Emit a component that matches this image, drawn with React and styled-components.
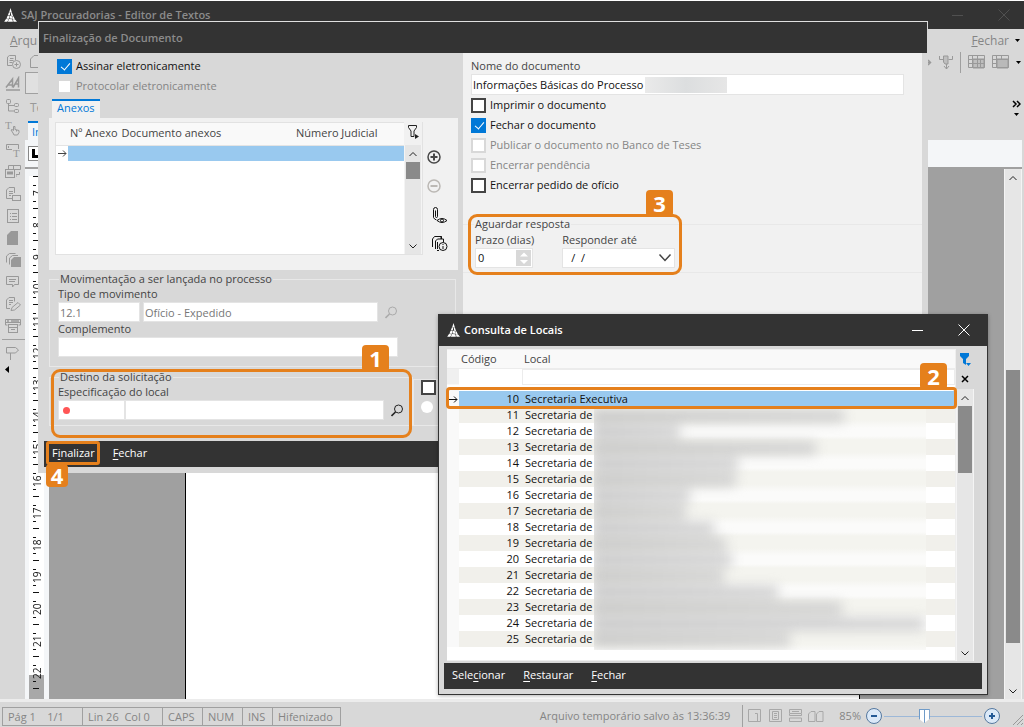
import { useState } from "react";
import styled, { createGlobalStyle, css } from "styled-components";

const GlobalStyle = createGlobalStyle`
    * {
        box-sizing: border-box;
    }
    body {
        margin: 0;
        background: #d8d8d8;
        font-family: "Open Sans", "Noto Sans", sans-serif;
        font-size: 11px;
        line-height: 14px;
        color: #444;
    }
    button, input, select {
        font: inherit;
        color: inherit;
        margin: 0;
        border-radius: 0;
    }
    svg {
        display: block;
        flex: none;
    }
`
const Desktop = styled.div`
    position: relative;
    display: flex;
    flex-direction: column;
    height: 100vh;
    overflow: hidden;
`
const AppTitle = styled.header`
    display: flex;
    align-items: center;
    gap: 4px;
    height: 29px;
    padding: 0 0 0 4px;
    background: #333;
    border-top: 1px solid #fff;
    color: #8b8b8b;
    h1 {
        flex: 1;
        margin: 0;
        font-size: 11px;
        font-weight: 600;
    }
`
const IconButton = styled.button`
    display: flex;
    align-items: center;
    justify-content: center;
    flex: none;
    padding: 0;
    border: 0;
    background: transparent;
    cursor: pointer;
    color: ${props => props.$color || "#222"};
    width: ${props => props.$w || 18}px;
    height: ${props => props.$h || 18}px;
`
const MenuBar = styled.nav`
    display: flex;
    align-items: center;
    gap: 6px;
    height: 23px;
    flex: none;
    padding: 0 4px 0 10px;
    color: #858585;
    font-size: 12px;
`
const MenuLink = styled.a`
    color: inherit;
    text-decoration: none;
`
const Push = styled.span`
    flex: 1;
`
const Workspace = styled.div`
    display: flex;
    flex: 1;
    min-height: 0;
`
const SideTools = styled.aside`
    display: flex;
    flex-direction: column;
    align-items: center;
    width: 25px;
    gap: 4px;
    padding-top: 1px;
    color: #999;
    hr {
        align-self: flex-end;
        width: 23px;
        margin: 0;
        border: 0;
        border-top: 1px solid #a0a0a0;
    }
`
const Editor = styled.main`
    display: flex;
    flex: 1;
    flex-direction: column;
    min-width: 0;
`
const ToolRow = styled.div`
    display: flex;
    align-items: center;
    gap: 7px;
    height: ${props => props.$h}px;
    flex: none;
    padding: 0 3px 0 5px;
    color: #999;
    font-size: 12px;
`
const ToolDivider = styled.span`
    width: 1px;
    height: 21px;
    background: #a0a0a0;
`
const StyleBox = styled.input`
    width: 120px;
    height: 22px;
    border: 1px solid #a0a0a0;
    background: #e0e0e0;
    margin-left: -5px;
`
const TabRow = styled.div`
    display: flex;
    align-items: stretch;
    height: 19px;
    flex: none;
    padding-left: 3px;
`
const EditorTab = styled.button`
    width: 80px;
    padding: 0 4px;
    border: 0;
    border-top: 2px solid #0078d7;
    background: #f4f6f8;
    color: #0078d7;
    text-align: left;
`
const RulerBar = styled.div`
    display: flex;
    align-items: center;
    height: 29px;
    flex: none;
    margin-right: 2px;
    padding-left: 3px;
    background: #f4f6f8;
    border-bottom: 2px solid #a0a0a0;
`
const TabStop = styled.button`
    display: flex;
    align-items: center;
    width: 17px;
    height: 15px;
    padding: 0 2px;
    border: 1px solid #888;
    background: #fff;
`
const Canvas = styled.div`
    display: flex;
    flex: 1;
    min-height: 0;
    padding-right: 2px;
`
const Ruler = styled.div`
    width: 24px;
    padding: 7px 5px 0 4px;
    background-color: #f4f6f8;
    background-image: linear-gradient(to top, #a8a8a8 24px, #fff 24px);
    background-origin: content-box;
    background-size: 15px 100%;
    background-repeat: no-repeat;
    overflow: hidden;
`
const RulerMark = styled.div`
    display: flex;
    flex-direction: column;
    height: 32px;
    padding-left: 4px;
    color: #111;
    i {
        flex: none;
        width: 6px;
        height: 1px;
        margin-bottom: 8px;
        background: #111;
    }
    span {
        writing-mode: vertical-rl;
        rotate: 180deg;
        height: 17px;
        width: 8px;
        border: solid #111;
        border-width: 1px 0;
        border-image: linear-gradient(90deg, transparent 5px, #111 5px) 1;
        text-align: center;
        font-size: 10px;
        line-height: 8px;
    }
`
const PageWell = styled.div`
    flex: 1;
    padding: 0 144px 0 136px;
    background: #a0a0a0;
`
const Page = styled.div`
    height: 100%;
    background: #fff;
    border: solid #000;
    border-width: 0 1px;
`
const ScrollTrack = styled.div`
    display: flex;
    flex-direction: column;
    align-items: stretch;
    flex: ${props => (props.$fill ? "1" : "none")};
    width: 18px;
    padding: 0 1px;
    background: #e6e6e6;
    border: solid #f4f4f4;
    border-width: 0 1px;
    color: #333;
`
const ScrollThumb = styled.div`
    height: ${props => props.$size};
    margin-top: ${props => props.$from || "0"};
    background: #8a8a8a;
`
const StatusBar = styled.footer`
    display: flex;
    align-items: center;
    height: 28px;
    flex: none;
    padding: 3px 0 0 2px;
    border-top: 3px solid #ececec;
    color: #858585;
    font-size: 11px;
`
const StatusCell = styled.span`
    width: ${props => props.$w}px;
    height: 19px;
    padding: 1px 5px;
    border: 1px solid #a0a0a0;
    margin-right: -1px;
    white-space: pre;
    line-height: 15px;
`
const ViewIcons = styled.div`
    display: flex;
    align-items: center;
    gap: 5px;
    height: 22px;
    margin-left: 12px;
    padding-left: 5px;
    border-left: 1px solid #a0a0a0;
    color: #a8a8a8;
`
const Zoom = styled.div`
    display: flex;
    align-items: center;
    gap: 2px;
    padding: 0 5px 0 15px;
    label {
        padding-right: 3px;
    }
`
const Slider = styled.input`
    appearance: none;
    width: 98px;
    height: 16px;
    background: linear-gradient(#9db8d8, #9db8d8) center / 100% 1px no-repeat;
    &::-webkit-slider-thumb {
        appearance: none;
        width: 11px;
        height: 14px;
        clip-path: polygon(0 0, 100% 0, 100% 70%, 50% 100%, 0 70%);
        border-top: 1px solid #6f9bc8;
        background: linear-gradient(90deg, #6f9bc8 1px, #fff 1px 5px, #6f9bc8 5px 6px, #fff 6px 10px, #6f9bc8 10px);
    }
`
const RoundButton = styled.button`
    display: flex;
    align-items: center;
    justify-content: center;
    width: 16px;
    height: 16px;
    padding: 0;
    border: 1px solid #55789f;
    border-radius: 8px;
    background: #dbe9f8;
    color: #245a96;
`

/* windows */
const Dialog = styled.section`
    position: absolute;
    background: #d8d8d8;
    ${props => props.$front ? css`
        top: 314px;
        left: 438px;
        right: 36px;
        border: solid #333;
        border-width: 0 1px 1px;
        box-shadow: 0 1px 4px rgba(0, 0, 0, 0.3);
    ` : css`
        top: 21px;
        left: 38px;
        right: 96px;
        border-top: 1px solid #e0e0e0;
    `}
`
const DialogTitle = styled.div`
    display: flex;
    align-items: center;
    gap: 4px;
    height: ${props => (props.$front ? 32 : 31)}px;
    padding: ${props => (props.$front ? "0 0 0 8px" : "0 4px")};
    margin-left: ${props => (props.$front ? 0 : 1)}px;
    margin-right: ${props => (props.$front ? 0 : 1)}px;
    background: #333;
    color: ${props => (props.$front ? "#fff" : "#8b8b8b")};
    h2 {
        flex: 1;
        margin: 0;
        font-size: 11px;
        font-weight: 600;
    }
`
const DialogBody = styled.div`
    display: grid;
    grid-template-columns: 414px 1fr;
    gap: 5px;
    padding: 0 6px;
    min-height: 388px;
`
const Column = styled.div`
    padding: 3px 0 0;
`
const DocColumn = styled.div`
    padding: 6px 0 0;
    background: #f1f1f1;
`
const Options = styled.div`
    display: flex;
    flex-direction: column;
    padding: 0 18px 0 ${props => props.$left}px;
`
const CheckLabel = styled.label`
    display: flex;
    align-items: center;
    gap: 4px;
    height: 20px;
    color: ${props => (props.$off ? "#858585" : "#111")};
`
const CheckInput = styled.input`
    appearance: none;
    position: relative;
    flex: none;
    width: 15px;
    height: 15px;
    border: 2px solid #444;
    background: #fff;
    &:checked {
        border-color: #0078d7;
        background: #0078d7;
    }
    &:checked::after {
        content: "";
        position: absolute;
        left: 4px;
        top: 0;
        width: 4px;
        height: 8px;
        border: solid #fff;
        border-width: 0 1px 1px 0;
        rotate: 40deg;
    }
    &:disabled {
        border-color: #d8d8d8;
    }
`
const RadioInput = styled.input`
    appearance: none;
    width: 12px;
    height: 12px;
    border-radius: 6px;
    background: #fff;
`
const Tab = styled.button`
    display: block;
    height: 19px;
    margin: 3px 0 0 8px;
    padding: 0 5px 3px;
    border: 0;
    border-top: 2px solid #0078d7;
    background: #f1f1f1;
    color: #0078d7;
    line-height: 14px;
`
const AttachPanel = styled.div`
    display: flex;
    margin-left: 5px;
    padding: 4px 0 15px 6px;
    background: #f1f1f1;
`
const AttachGrid = styled.div`
    display: flex;
    width: 368px;
    height: 133px;
    border: 1px solid #e2e2e2;
    background: #fff;
`
const AttachTable = styled.table`
    width: 100%;
    border-collapse: collapse;
    th {
        height: 22px;
        padding: 0 2px 2px;
        background: #f9f9f9;
        border-bottom: 1px solid #e4e4e4;
        font-weight: 400;
        text-align: left;
        white-space: nowrap;
    }
    td {
        height: 16px;
        padding: 0;
        border-top: 1px solid #fff;
        background: #99c9ef;
    }
    td:first-child {
        background: #fff;
    }
`
const TableWrap = styled.div`
    flex: 1;
`
const GridSide = styled.div`
    display: flex;
    flex-direction: column;
    width: 18px;
`
const FilterCorner = styled.div`
    height: ${props => props.$h}px;
    margin-top: -1px;
    background: ${props => props.$bg};
    display: flex;
    flex-direction: column;
    align-items: center;
`
const AttachTools = styled.div`
    display: flex;
    flex-direction: column;
    gap: 10px;
    padding: 26px 0 0 2px;
`
const Group = styled.fieldset`
    position: relative;
    min-width: 0;
    margin: ${props => props.$top || 0}px 0 0;
    padding: 2px 2px ${props => props.$bottom || 4}px 8px;
    border: 1px solid #e8e8e8;
    legend {
        height: 12px;
        margin-left: 1px;
        padding: 0 1px;
        line-height: 12px;
    }
    label {
        display: block;
        padding-bottom: 1px;
    }
`
const Moves = styled.div`
    margin: 3px 2px 0 5px;
`
const Split = styled.div`
    display: grid;
    grid-template-columns: 364px 1fr;
`
const SideGroup = styled(Group)`
    display: flex;
    flex-direction: column;
    gap: 6px;
    align-items: flex-start;
    margin-top: 12px;
    padding: 0 0 0 7px;
`
const Field = styled.div`
    display: flex;
    flex-direction: column;
`
const Inline = styled.div`
    display: flex;
    align-items: center;
    gap: ${props => props.$gap || 0}px;
`
const TextBox = styled.input`
    width: ${props => props.$w || "100%"};
    height: ${props => props.$h || 20}px;
    padding: 0 1px;
    border: 1px solid #e4e4e4;
    background: #fff;
    color: ${props => (props.$dim ? "#777" : "#111")};
`
const Required = styled.span`
    position: relative;
    display: flex;
    &::after {
        content: "";
        position: absolute;
        left: 5px;
        top: 7px;
        width: 7px;
        height: 7px;
        border-radius: 4px;
        background: #ff5555;
    }
`
const NameField = styled.div`
    position: relative;
    display: flex;
    margin-top: 1px;
`
const Smudge = styled.span`
    position: absolute;
    left: 174px;
    top: 3px;
    width: 82px;
    height: 16px;
    background: linear-gradient(90deg, #eaeaea, #dcdedf 50%, #e6e6e6);
`
const WaitGroup = styled(Group)`
    margin: 23px 0 0;
    padding: 3px 12px 4px;
    border-width: 1px 0;
    legend {
        margin-left: -1px;
    }
`
const Spinner = styled.span`
    display: flex;
    width: 58px;
    height: 20px;
    padding: 1px;
    border: 1px solid #e4e4e4;
    background: #fff;
    input {
        width: 38px;
        padding: 0 1px;
        border: 0;
        color: #111;
    }
    svg {
        margin-left: auto;
        background: #d8d8d8;
    }
`
const DateBox = styled.span`
    position: relative;
    display: flex;
    select {
        appearance: none;
        width: 113px;
        height: 20px;
        padding: 0 8px;
        border: 1px solid #e4e4e4;
        background: #fff;
        color: #111;
    }
    svg {
        position: absolute;
        right: 3px;
        top: 6px;
        pointer-events: none;
    }
`
const Actions = styled.footer`
    display: flex;
    align-items: center;
    gap: 18px;
    height: 26px;
    margin: ${props => props.$m};
    padding: 0 8px 2px;
    background: #333;
`
const ActionButton = styled.button`
    position: relative;
    padding: 0;
    border: 0;
    background: transparent;
    color: #fff;
    u {
        text-underline-offset: 2px;
    }
`
/* numbered callouts of the tutorial */
const Callout = styled.span`
    position: absolute;
    inset: ${props => props.$inset};
    border: 3px solid #e5801c;
    border-radius: ${props => props.$radius || 9}px;
    pointer-events: none;
    z-index: 2;
`
const Badge = styled.b`
    position: absolute;
    ${props => props.$below ? css`
        left: -3px;
        top: 20px;
        width: 22px;
        height: 23px;
    ` : css`
        right: ${props.$right}px;
        bottom: 100%;
        width: 27px;
        height: 27px;
    `}
    display: flex;
    align-items: center;
    justify-content: center;
    border-radius: 4px;
    background: #e5801c;
    color: #fff;
    font-size: 22px;
    line-height: 22px;
    padding-bottom: 2px;
`
const LookupBody = styled.div`
    position: relative;
    display: flex;
    margin: 3px 13px 2px 8px;
    height: 312px;
`
const LookupMain = styled.div`
    position: relative;
    flex: 1;
    background: #fff;
    border: solid #eee;
    border-width: 1px 1px 1px 0;
`
const LookupTable = styled.table`
    width: 100%;
    border-collapse: collapse;
    table-layout: fixed;
    th {
        height: 18px;
        padding: 0 2px;
        background: #f9f9f9;
        border-bottom: 1px solid #ececec;
        font-weight: 400;
        text-align: left;
    }
    td {
        height: 16px;
        padding: 0 3px;
        line-height: 16px;
        color: #111;
    }
    td:first-child {
        padding: 0;
        background: #f9f9f9;
    }
    td:nth-child(2) {
        text-align: right;
    }
`
const FilterRow = styled.tr`
    td {
        height: 22px;
        padding: 0;
    }
    && td:first-child {
        background: linear-gradient(#f0f0f0 16px, #fff 16px);
    }
`
const FilterInput = styled.input`
    display: block;
    width: 100%;
    height: 16px;
    margin-bottom: 6px;
    border: ${props => (props.$line ? "1px solid #ececec" : "0")};
    background: #fff;
`
const PlaceRow = styled.tr`
    background: ${props => props.$selected ? "#99c9ef" : props.$odd ? "#f1f0eb" : "#fff"};
`
const Obscured = styled.div`
    position: absolute;
    left: 147px;
    right: 29px;
    top: 58px;
    height: 242px;
    overflow: hidden;
    background: repeating-linear-gradient(#f4f4ef 0 12px, #fbfbfa 20px 28px, #f4f4ef 32px);
    > div {
        display: flex;
        flex-direction: column;
        margin-left: -2px;
        filter: blur(6px);
    }
`
const ObscuredLine = styled.span`
    height: 16px;
    border: solid transparent;
    border-width: 2px 0;
    background: linear-gradient(90deg, #c4c4c4, #d0d0d0);
    background-clip: padding-box;
`
const LookupSide = styled.div`
    display: flex;
    flex-direction: column;
    width: 18px;
`

const places = [
    [10, "Secretaria Executiva", 0],
    [11, "Secretaria de", 252],
    [12, "Secretaria de", 88],
    [13, "Secretaria de", 224],
    [14, "Secretaria de", 146],
    [15, "Secretaria de", 144],
    [16, "Secretaria de", 98],
    [17, "Secretaria de", 94],
    [18, "Secretaria de", 122],
    [19, "Secretaria de", 134],
    [20, "Secretaria de", 140],
    [21, "Secretaria de", 132],
    [22, "Secretaria de", 186],
    [23, "Secretaria de", 250],
    [24, "Secretaria de", 332],
    [25, "Secretaria de", 198],
]
const rulerNumbers = Array.from({ length: 16 }, (_, i) => i + 7)

function Icon({ w = 16, h = 16, children, ...rest }) {
    return (
        <svg width={w} height={h} viewBox={`0 0 ${w} ${h}`} fill="none" stroke="currentColor" strokeWidth="1" aria-hidden="true" {...rest}>
            {children}
        </svg>
    );
}
function Logo() {
    return (
        <Icon w={13} h={14} fill="#fff" stroke="none">
            <path d="M6.5 0 7.8 4.2 5.2 4.2zM4.9 4.6h1.4l-.5 2.6H3.900zM6.800 4.600h1.100l1.300 3.800-2-.9zM3.600 7.700h2.100L4.900 10.800H2.400zM6.100 7.800h1.500l.8 2.900-2.900-.2zM8.200 8.600h1.400l1.300 2.900-2.200-.5zM2 11.100l2.700.2L3.300 13.800H.2zM5.100 11l3.200.2.6 2.600H3.900zM8.900 11.300l2.400.5 1.700 2H9.500z" />
        </Icon>
    );
}
function Chevron({ up }) {
    return <Icon w={16} h={18}><path d={up ? "M4.5 11 8 7.5l3.5 3.5" : "M4.5 7.5 8 11l3.5-3.5"} /></Icon>;
}
function Caret() {
    return <Icon w={5} h={3} fill="#000" stroke="none"><path d="M0 0h5L2.5 3z" /></Icon>;
}
function Minimize() {
    return <Icon w={12} h={12}><path d="M0 6.5h11" /></Icon>;
}
function Close() {
    return <Icon w={12} h={12}><path d="m.5.5 11 11M11.5.5l-11 11" /></Icon>;
}
function Magnifier() {
    return <Icon w={13} h={13}><circle cx="7.5" cy="5" r="4" /><path strokeWidth="1.6" d="m4.5 8-4 4" /></Icon>;
}
function MaskedFilter() {
    return <Icon w={12} h={16}><path d="M1.500 1.500h8v2L7 7v5.500H4V7L1.500 3.500z" /><path fill="currentColor" stroke="none" d="m8 10 4 2.500L8 15z" /></Icon>;
}

const sideIcons = [
    ["Novo documento", <><path d="M2.500 11.500V3l2-1.500h6V6M5 4.500h3.500M4.500 6.500h4M4.500 8.500h3M2.500 11.500H7" /><circle cx="11.500" cy="10.500" r="4" /><path d="M9.500 10.500h4M11.500 8.500v4" /></>],
    ["Fonte", <><path strokeWidth="1.500" d="M1 11.500 7.500 3v8.500M3.500 9h4M8 11.500 13.500 2v9.500M10 8h3.500M1 14h14" /></>],
    ["Estrutura", <><rect x="1.500" y="1.500" width="4" height="4" rx="1" /><rect x="9.500" y="5.500" width="4" height="3" rx="1" /><rect x="9.500" y="11.500" width="4" height="3" rx="1" /><path d="M3.500 5.500v7.500h6M3.500 7.500h6" /></>],
    ["Selecionar texto", <><text x="0" y="9" fontSize="11" fill="currentColor" stroke="none" fontFamily="Liberation Serif">T</text><path d="m8 13-2-3 1-.5 1.500 1V6.500h1.500V9.500l4 1v2l-1.500 2.500H9zM11.500 10v1.500" /></>],
    ["Campo de texto", <><path d="M7 7.500H1.500v-5h12v4.500M3.500 4v2" /><text x="8" y="15" fontSize="11" fill="currentColor" stroke="none" fontFamily="Liberation Serif">T</text></>],
    ["Inserir bloco", <><path d="M3.500 5V1.500h12v4H9M8.500 2v3" /><rect x=".5" y="5.500" width="9" height="8" /><path strokeWidth="3" d="M2 9h6" /><path d="M11 10.500h3.500V8M11 12h1" /></>],
    ["Modelo", <><path d="M7 12.500H1.500V4l2.500-2.500h5.500V7M4 5.500h4M4 7.500h4M4 9.500h2" /><rect x="7.500" y="9.500" width="8" height="5" /></>],
    ["Lista", <><rect x="2.500" y="1.500" width="11" height="13" /><path d="M5 5.500h1M7 5.500h5M5 8.500h1M7 8.500h5M5 11.500h1M7 11.500h5" /></>],
    ["Página", <path fill="currentColor" stroke="none" d="M6 1h7v14H2V5z" />],
    ["Páginas", <><path fill="currentColor" stroke="none" d="M9 5h7v10H6V8z" /><path d="M4.500 12.500V6l3-2.500h5.500M1.500 10.500V4l3-2.500h6" /></>],
    ["Comentário", <><path d="M1.500 2.500h12v8h-4L7.500 13v-2.500h-6z" /><path d="M4 5.500h7M4 7.500h6" /></>],
    ["Editar", <><path d="M5 12.500H1.500V4l2.500-2.500h5.500v4M4 4.500h4M4 6.500h4M4 8.500h2M6 14.500l1-3 6-5 2.500 2.500-6 5z" /></>],
    ["Formulário", <><path d="M2.500 7H.5V1.500h15V7h-2M1 4.500h14" /><path strokeWidth="1.500" d="M2 3h2M6 3h8" /><rect x="3.500" y="6.500" width="9" height="8" /><path d="M4 9.500h8M6 11.500h4" /></>],
]

function ScrollButton({ up }) {
    return <IconButton aria-label={up ? "Rolar para cima" : "Rolar para baixo"} $w={14} $h={17}><Chevron up={up} /></IconButton>;
}
function Check({ label, ...rest }) {
    return (
        <CheckLabel $off={rest.disabled}>
            <CheckInput type="checkbox" {...rest} />
            {label}
        </CheckLabel>
    );
}

function EditorWindow() {
    return (
        <>
            <AppTitle>
                <Logo />
                <h1>SAJ Procuradorias - Editor de Textos</h1>
                <IconButton aria-label="Minimizar" $color="#505050" $w={44}><Minimize /></IconButton>
                <IconButton aria-label="Fechar editor" $color="#505050" $w={40}><Close /></IconButton>
            </AppTitle>
            <MenuBar>
                <MenuLink href="#arquivo"><u>A</u>rquivo</MenuLink>
                <Push />
                <MenuLink href="#fechar"><u>F</u>echar</MenuLink>
                <Caret />
            </MenuBar>
            <Workspace>
                <SideTools>
                    {sideIcons.map(([name, art]) => (
                        <IconButton key={name} aria-label={name} $color="#999" $w={20}>
                            <Icon>{art}</Icon>
                        </IconButton>
                    ))}
                    <hr />
                    <IconButton aria-label="Marcador" $color="#999" $w={20}>
                        <Icon><path d="M1.500 2.500h9l3 2.500-3 3h-9zM5.500 8v7" /></Icon>
                    </IconButton>
                    <Icon w={16} h={8} fill="#000" stroke="none"><path d="M4 0v7L0 3.500z" /></Icon>
                </SideTools>
                <Editor>
                    <ToolRow $h={20}>
                        <Icon><path d="M15 13.500H.5V5L4 1.500h11" /></Icon>
                        <Push />
                        <Icon w={7} h={8}><path strokeWidth="1.500" d="M0 4.500h5M3 2l2.500 2.500L3 7" /></Icon>
                        <Icon w={14} h={15}><path d="M.5 1v3.500h4M13.500 1v3.500h-4M7.500 9v5" /><path fill="currentColor" fillOpacity=".4" d="M4.500 1v6l1.500 2h3V1z" /><path d="m5 11 2.500 3L10 11" /></Icon>
                        <ToolDivider />
                        <Icon w={17} h={14}><path fill="currentColor" fillOpacity=".4" d="M5 4h11v9H5z" /><path d="M.5.5h16v12H.5zM.5 4.500h16M.5 8.500h16M4.500.5v12M9.500.5v12M12.500 4v8" /></Icon>
                        <Icon w={17} h={14}><path fill="currentColor" fillOpacity=".5" d="M5 4h11v9H5z" /><path d="M.5.5h16v12H.5zM.5 4.500h16M.5 8.500h4M4.500.5v12M9.500.5v4" /></Icon>
                        <Caret />
                    </ToolRow>
                    <ToolRow $h={22}>
                        <StyleBox aria-label="Estilo" />
                    </ToolRow>
                    <ToolRow $h={27}>
                        <span>Texto</span>
                        <Push />
                        <Icon w={9} h={18} style={{ color: "#000" }}>
                            <path strokeWidth="1.500" d="m1 2 3 3-3 3M5 2l3 3-3 3" />
                            <path fill="#000" stroke="none" d="M2 14h5l-2.500 3z" />
                        </Icon>
                    </ToolRow>
                    <TabRow>
                        <EditorTab>Início</EditorTab>
                    </TabRow>
                    <RulerBar>
                        <TabStop aria-label="Tabulação">
                            <Icon w={12} h={9}><path strokeWidth="3" stroke="#000" d="M2.500 0v7.500H10" /></Icon>
                        </TabStop>
                    </RulerBar>
                    <Canvas>
                        <Ruler>
                            {rulerNumbers.map(n => (
                                <RulerMark key={n}><i /><span>{n}</span></RulerMark>
                            ))}
                            <RulerMark><i /></RulerMark>
                        </Ruler>
                        <PageWell><Page /></PageWell>
                        <ScrollTrack>
                            <ScrollButton up />
                            <ScrollThumb $from="184px" $size="273px" />
                            <Push />
                            <ScrollButton />
                        </ScrollTrack>
                    </Canvas>
                </Editor>
            </Workspace>
            <StatusBar>
                <StatusCell $w={81}>{"Pág 1    1/1"}</StatusCell>
                <StatusCell $w={81}>{"Lin 26  Col 0"}</StatusCell>
                <StatusCell $w={41}>CAPS</StatusCell>
                <StatusCell $w={41}>NUM</StatusCell>
                <StatusCell $w={31}>INS</StatusCell>
                <StatusCell $w={69}>Hifenizado</StatusCell>
                <Push />
                <span>Arquivo temporário salvo às 13:36:39</span>
                <ViewIcons>
                    <Icon w={15}><path d="M.5 1.500h12v12H.5zM7 5.500h2.500v8" /></Icon>
                    <Icon w={15}><path d="M1.500 1.500h12v12h-12zM4.500 3.500h6v8h-6zM6 5.500h3M6 7.500h3M6 9.500h3" /></Icon>
                    <Icon w={15}><path d="M1.500 5V1.500h12V5M1.500 7.500h12v-2h-12zM1.500 10v3.500h12V10zM4 3.500h7" /></Icon>
                    <Icon><path d="M.5 13.500V6L3 3.500h4v10zM8.500 13.500V6L11 3.500h4v10z" /></Icon>
                </ViewIcons>
                <Zoom>
                    <label htmlFor="zoom">85%</label>
                    <RoundButton aria-label="Diminuir zoom"><Icon w={8} h={8}><path strokeWidth="2" d="M1 4h6" /></Icon></RoundButton>
                    <Slider id="zoom" type="range" min="0" max="100" defaultValue="40" />
                    <RoundButton aria-label="Aumentar zoom"><Icon w={8} h={8}><path strokeWidth="2" d="M1 4h6M4 1v6" /></Icon></RoundButton>
                </Zoom>
                <Icon w={19} h={20}><path stroke="#999" d="M8 19 18 9M12 19l6-6M16 19l2-2" /></Icon>
            </StatusBar>
        </>
    );
}

function Attachments() {
    return (
        <AttachPanel>
            <AttachGrid>
                <TableWrap>
                    <AttachTable>
                        <colgroup><col style={{ width: 12 }} /><col style={{ width: 51 }} /><col /><col style={{ width: 110 }} /></colgroup>
                        <thead>
                            <tr><th /><th>Nº Anexo</th><th>Documento anexos</th><th>Número Judicial</th></tr>
                        </thead>
                        <tbody>
                            <tr><td><Icon w={12} h={12}><path d="M2 6.500h8M7 3.500l3 3-3 3" /></Icon></td><td /><td /><td /></tr>
                        </tbody>
                    </AttachTable>
                </TableWrap>
                <GridSide>
                    <FilterCorner $h={23} $bg="#f1f1f1">
                        <IconButton aria-label="Filtrar anexos" $h={20}><MaskedFilter /></IconButton>
                    </FilterCorner>
                    <ScrollTrack $fill>
                        <ScrollButton up />
                        <ScrollThumb $size="17px" />
                        <Push />
                        <ScrollButton />
                    </ScrollTrack>
                </GridSide>
            </AttachGrid>
            <AttachTools>
                <IconButton aria-label="Adicionar" $color="#484848">
                    <Icon w={14} h={14}><g strokeWidth="1.500"><circle cx="7" cy="7" r="6" /><path strokeWidth="2" d="M3.500 7h7M7 3.500v7" /></g></Icon>
                </IconButton>
                <IconButton aria-label="Remover" $color="#bbb8b4" $h={20}>
                    <Icon w={14} h={14}><g strokeWidth="1.500"><circle cx="7" cy="7" r="6" /><path strokeWidth="2" d="M3.500 7h7" /></g></Icon>
                </IconButton>
                <IconButton aria-label="Visualizar anexo" $color="#111" $w={28}>
                    <Icon w={17} h={17}><path d="M4.500 3.500v6a1 1 0 0 0 2 0v-7a2 2 0 0 0-4 0v8q1 2 3 2.500M6 13.500q5-4 10 0-5 4-10 0z" /><circle cx="11" cy="13.500" r="1.500" /></Icon>
                </IconButton>
                <IconButton aria-label="Detalhes" $color="#111" $w={28}>
                    <Icon w={17} h={17}><path d="M1.500 12V4l2-2.500h7V4M4.500 14V6l2-2h6v3M6 15.500h2M6.500 7v7M10 1v3" /><circle cx="12" cy="11.500" r="4" /><path d="M12 9v1M12 11v3" /></Icon>
                </IconButton>
            </AttachTools>
        </AttachPanel>
    );
}

function FinishDialog() {
    const [deadline, setDeadline] = useState("0");
    return (
        <Dialog aria-label="Finalização de Documento">
            <DialogTitle><h2>Finalização de Documento</h2></DialogTitle>
            <DialogBody>
                <Column>
                    <Options $left={13}>
                        <Check label="Assinar eletronicamente" defaultChecked />
                        <Check label="Protocolar eletronicamente" disabled />
                    </Options>
                    <Tab>Anexos</Tab>
                    <Attachments />
                    <Moves>
                        <Group $bottom={9}>
                            <legend>Movimentação a ser lançada no processo</legend>
                            <label htmlFor="tipo">Tipo de movimento</label>
                            <Inline $gap={3}>
                                <TextBox id="tipo" $w="82px" $dim defaultValue="12.1" />
                                <TextBox $w="235px" $dim defaultValue="Ofício - Expedido" aria-label="Descrição do movimento" />
                                <IconButton aria-label="Pesquisar movimento" $color="#aaa" $w={20}><Magnifier /></IconButton>
                            </Inline>
                            <Field>
                                <label htmlFor="complemento">Complemento</label>
                                <TextBox id="complemento" $w="340px" />
                            </Field>
                        </Group>
                        <Split>
                            <Group $top={4} $bottom={5}>
                                <legend>Destino da solicitação</legend>
                                <label htmlFor="local">Especificação do local</label>
                                <Inline>
                                    <Required><TextBox id="local" $w="67px" /></Required>
                                    <TextBox $w="260px" aria-label="Nome do local" />
                                    <IconButton aria-label="Pesquisar local" $w={26}><Magnifier /></IconButton>
                                </Inline>
                                <Callout $inset="-14px 0 -13px 1px">
                                    <Badge $right={20}>1</Badge>
                                </Callout>
                            </Group>
                            <SideGroup>
                                <CheckInput type="checkbox" aria-label="Habilitar opção" />
                                <RadioInput type="radio" aria-label="Opção" />
                            </SideGroup>
                        </Split>
                    </Moves>
                </Column>
                <DocColumn>
                    <Options $left={8}>
                        <label htmlFor="nome">Nome do documento</label>
                        <NameField>
                            <TextBox id="nome" $h={21} defaultValue="Informações Básicas do Processo" />
                            <Smudge />
                        </NameField>
                        <Check label="Imprimir o documento" />
                        <Check label="Fechar o documento" defaultChecked />
                        <Check label="Publicar o documento no Banco de Teses" disabled />
                        <Check label="Encerrar pendência" disabled />
                        <Check label="Encerrar pedido de ofício" />
                    </Options>
                    <WaitGroup>
                        <legend>Aguardar resposta</legend>
                        <Inline $gap={28}>
                            <Field>
                                <label htmlFor="prazo">Prazo (dias)</label>
                                <Spinner>
                                    <input id="prazo" value={deadline} onChange={ev => setDeadline(ev.target.value)} />
                                    <Icon w={15} h={16} fill="#fff" stroke="none"><path d="M4 6.500h8L8 2.500zM4 10h8l-4 4z" /></Icon>
                                </Spinner>
                            </Field>
                            <Field>
                                <label htmlFor="ate">Responder até</label>
                                <DateBox>
                                    <select id="ate"><option>/&nbsp; /</option></select>
                                    <Icon w={14} h={8}><path strokeWidth="1.500" d="m1.500.5 5.500 6 5.500-6" /></Icon>
                                </DateBox>
                            </Field>
                        </Inline>
                        <Callout $inset="-16px auto -3px 5px" style={{ width: 214 }}>
                            <Badge $right={6}>3</Badge>
                        </Callout>
                    </WaitGroup>
                </DocColumn>
            </DialogBody>
            <Actions $m="0 6px 6px">
                <ActionButton>
                    F<u>i</u>nalizar
                    <Callout $inset="-5px -5px -5px -6px" $radius={3}>
                        <Badge $below>4</Badge>
                    </Callout>
                </ActionButton>
                <ActionButton><u>F</u>echar</ActionButton>
            </Actions>
        </Dialog>
    );
}

function LookupDialog() {
    return (
        <Dialog $front aria-label="Consulta de Locais">
            <DialogTitle $front>
                <Logo />
                <h2>Consulta de Locais</h2>
                <IconButton aria-label="Minimizar consulta" $color="#fff" $w={38}><Minimize /></IconButton>
                <IconButton aria-label="Fechar consulta" $color="#fff" $w={46}><Close /></IconButton>
            </DialogTitle>
            <LookupBody>
                <LookupMain>
                    <LookupTable>
                        <colgroup><col style={{ width: 12 }} /><col style={{ width: 63 }} /><col /></colgroup>
                        <thead>
                            <tr><th /><th>Código</th><th>Local</th></tr>
                        </thead>
                        <tbody>
                            <FilterRow>
                                <td />
                                <td><FilterInput aria-label="Filtrar código" /></td>
                                <td><FilterInput $line aria-label="Filtrar local" /></td>
                            </FilterRow>
                            {places.map(([code, name], i) => (
                                <PlaceRow key={code} $selected={i === 0} $odd={i % 2 === 1}>
                                    <td>{i === 0 && <Icon w={12} h={12}><path d="M2 6.500h8M7 3.500l3 3-3 3" /></Icon>}</td>
                                    <td>{code}</td>
                                    <td>{name}</td>
                                </PlaceRow>
                            ))}
                        </tbody>
                    </LookupTable>
                    <Obscured>
                        <div>
                            {places.slice(1).map(([code, , width]) => (
                                <ObscuredLine key={code} style={{ width }} />
                            ))}
                        </div>
                    </Obscured>
                    <Callout $inset="37px -2px auto -1px" $radius={4} style={{ height: 22 }}>
                        <Badge $right={7}>2</Badge>
                    </Callout>
                </LookupMain>
                <LookupSide>
                    <FilterCorner $h={41} $bg="#d8d8d8">
                        <IconButton aria-label="Filtrar locais" $color="#0078d7" $h={22}>
                            <Icon w={13} h={15} fill="currentColor" stroke="none"><path d="M1 1h9v3L7 7v6L4 11V7L1 4zM7 11h5l-2.500 3z" /></Icon>
                        </IconButton>
                        <IconButton aria-label="Limpar filtro" $color="#000">
                            <Icon w={8} h={8}><path strokeWidth="1.500" d="m1 1 6 6M7 1 1 7" /></Icon>
                        </IconButton>
                    </FilterCorner>
                    <ScrollTrack $fill>
                        <ScrollButton up />
                        <ScrollThumb $size="67px" />
                        <Push />
                        <ScrollButton />
                    </ScrollTrack>
                </LookupSide>
            </LookupBody>
            <Actions $m="0 5px 5px">
                <ActionButton>Sele<u>c</u>ionar</ActionButton>
                <ActionButton><u>R</u>estaurar</ActionButton>
                <ActionButton><u>F</u>echar</ActionButton>
            </Actions>
        </Dialog>
    );
}

export default function App() {
    return (
        <Desktop>
            <GlobalStyle />
            <EditorWindow />
            <FinishDialog />
            <LookupDialog />
        </Desktop>
    );
}
